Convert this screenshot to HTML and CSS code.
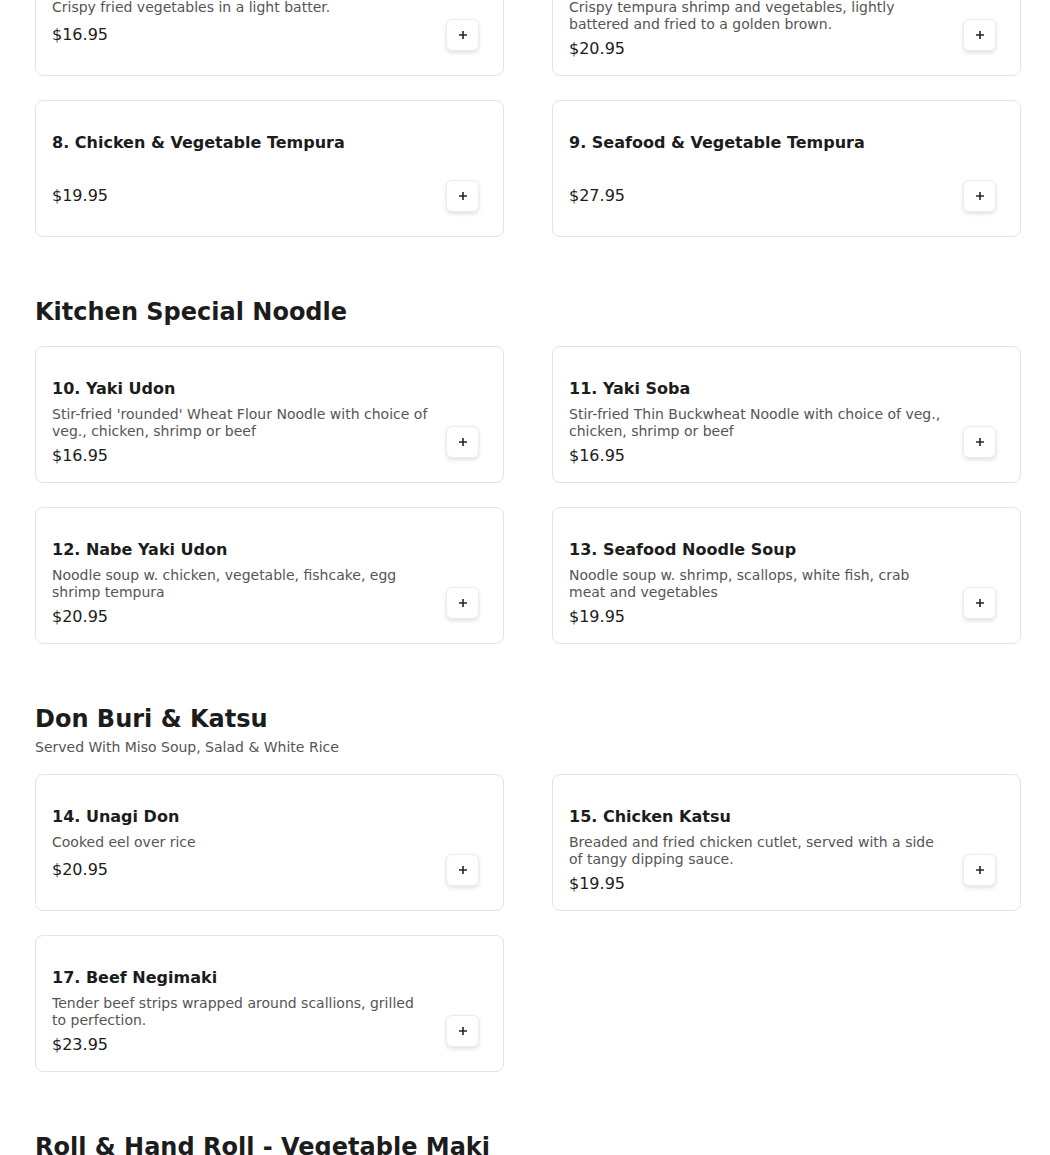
FILE: index.html
```html
<!DOCTYPE html>
<html lang="en">
<head>
<meta charset="utf-8">
<title>Menu</title>
<link rel="stylesheet" href="styles.css">
</head>
<body>
<main class="menu">
  <section class="section first">
    <div class="grid">
      <article class="card">
        <div class="info">
          <h3 class="name">6. Vegetable Tempura</h3>
          <p class="desc">Crispy fried vegetables in a light batter.</p>
          <p class="price">$16.95</p>
        </div>
        <button class="add" type="button" aria-label="Add"><svg viewBox="0 0 10 10" width="10" height="10"><path d="M5 1v8M1 5h8"/></svg></button>
      </article>
      <article class="card">
        <div class="info">
          <h3 class="name">7. Shrimp &amp; Vegetable Tempura</h3>
          <p class="desc">Crispy tempura shrimp and vegetables, lightly battered and fried to a golden brown.</p>
          <p class="price">$20.95</p>
        </div>
        <button class="add" type="button" aria-label="Add"><svg viewBox="0 0 10 10" width="10" height="10"><path d="M5 1v8M1 5h8"/></svg></button>
      </article>
      <article class="card">
        <div class="info">
          <h3 class="name">8. Chicken &amp; Vegetable Tempura</h3>
          <p class="desc"></p>
          <p class="price">$19.95</p>
        </div>
        <button class="add" type="button" aria-label="Add"><svg viewBox="0 0 10 10" width="10" height="10"><path d="M5 1v8M1 5h8"/></svg></button>
      </article>
      <article class="card">
        <div class="info">
          <h3 class="name">9. Seafood &amp; Vegetable Tempura</h3>
          <p class="desc"></p>
          <p class="price">$27.95</p>
        </div>
        <button class="add" type="button" aria-label="Add"><svg viewBox="0 0 10 10" width="10" height="10"><path d="M5 1v8M1 5h8"/></svg></button>
      </article>
    </div>
  </section>

  <section class="section">
    <h2 class="heading">Kitchen Special Noodle</h2>
    <div class="grid">
      <article class="card">
        <div class="info">
          <h3 class="name">10. Yaki Udon</h3>
          <p class="desc">Stir-fried 'rounded' Wheat Flour Noodle with choice of veg., chicken, shrimp or beef</p>
          <p class="price">$16.95</p>
        </div>
        <button class="add" type="button" aria-label="Add"><svg viewBox="0 0 10 10" width="10" height="10"><path d="M5 1v8M1 5h8"/></svg></button>
      </article>
      <article class="card">
        <div class="info">
          <h3 class="name">11. Yaki Soba</h3>
          <p class="desc">Stir-fried Thin Buckwheat Noodle with choice of veg., chicken, shrimp or beef</p>
          <p class="price">$16.95</p>
        </div>
        <button class="add" type="button" aria-label="Add"><svg viewBox="0 0 10 10" width="10" height="10"><path d="M5 1v8M1 5h8"/></svg></button>
      </article>
      <article class="card">
        <div class="info">
          <h3 class="name">12. Nabe Yaki Udon</h3>
          <p class="desc">Noodle soup w. chicken, vegetable, fishcake, egg shrimp tempura</p>
          <p class="price">$20.95</p>
        </div>
        <button class="add" type="button" aria-label="Add"><svg viewBox="0 0 10 10" width="10" height="10"><path d="M5 1v8M1 5h8"/></svg></button>
      </article>
      <article class="card">
        <div class="info">
          <h3 class="name">13. Seafood Noodle Soup</h3>
          <p class="desc">Noodle soup w. shrimp, scallops, white fish, crab meat and vegetables</p>
          <p class="price">$19.95</p>
        </div>
        <button class="add" type="button" aria-label="Add"><svg viewBox="0 0 10 10" width="10" height="10"><path d="M5 1v8M1 5h8"/></svg></button>
      </article>
    </div>
  </section>

  <section class="section">
    <h2 class="heading">Don Buri &amp; Katsu</h2>
    <p class="subheading">Served With Miso Soup, Salad &amp; White Rice</p>
    <div class="grid">
      <article class="card">
        <div class="info">
          <h3 class="name">14. Unagi Don</h3>
          <p class="desc">Cooked eel over rice</p>
          <p class="price">$20.95</p>
        </div>
        <button class="add" type="button" aria-label="Add"><svg viewBox="0 0 10 10" width="10" height="10"><path d="M5 1v8M1 5h8"/></svg></button>
      </article>
      <article class="card">
        <div class="info">
          <h3 class="name">15. Chicken Katsu</h3>
          <p class="desc">Breaded and fried chicken cutlet, served with a side of tangy dipping sauce.</p>
          <p class="price">$19.95</p>
        </div>
        <button class="add" type="button" aria-label="Add"><svg viewBox="0 0 10 10" width="10" height="10"><path d="M5 1v8M1 5h8"/></svg></button>
      </article>
      <article class="card">
        <div class="info">
          <h3 class="name">17. Beef Negimaki</h3>
          <p class="desc">Tender beef strips wrapped around scallions, grilled to perfection.</p>
          <p class="price">$23.95</p>
        </div>
        <button class="add" type="button" aria-label="Add"><svg viewBox="0 0 10 10" width="10" height="10"><path d="M5 1v8M1 5h8"/></svg></button>
      </article>
    </div>
  </section>

  <section class="section">
    <h2 class="heading">Roll &amp; Hand Roll - Vegetable Maki</h2>
  </section>
</main>
</body>
</html>
```

FILE: styles.css
```css
* { box-sizing: border-box; }

html, body {
  margin: 0;
  padding: 0;
  background: #ffffff;
}

body {
  font-family: "DejaVu Sans", "Liberation Sans", sans-serif;
  color: #1c1c1c;
  overflow: hidden;
}

.menu {
  width: 986px;
  margin: -61px 0 0 35px;
}

.section {
  margin-top: 59px;
}

.section.first {
  margin-top: 0;
}

.heading {
  margin: 0;
  font-size: 24px;
  line-height: 32px;
  font-weight: 700;
  color: #1c1c1c;
}

.subheading {
  margin: 2px 0 0;
  font-size: 14px;
  line-height: 20px;
  color: #555555;
}

.heading + .grid {
  margin-top: 18px;
}

.subheading + .grid {
  margin-top: 17px;
}

.grid {
  display: grid;
  grid-template-columns: 1fr 1fr;
  column-gap: 48px;
  row-gap: 24px;
}

.card {
  display: flex;
  align-items: flex-start;
  gap: 16px;
  min-height: 137px;
  padding: 30px 24px 14px 16px;
  border: 1px solid #e3e3e3;
  border-radius: 8px;
  background: #ffffff;
}

.info {
  flex: 1;
  min-width: 0;
}

.name {
  margin: 0;
  font-size: 16px;
  line-height: 24px;
  font-weight: 700;
  color: #1c1c1c;
}

.desc {
  margin: 5px 0 0;
  min-height: 20px;
  font-size: 14px;
  line-height: 17px;
  color: #555555;
}

.price {
  margin: 4px 0 0;
  font-size: 16px;
  line-height: 24px;
  color: #1c1c1c;
}

.add {
  flex: none;
  display: flex;
  align-items: center;
  justify-content: center;
  width: 33px;
  height: 32px;
  margin-top: 49px;
  padding: 0;
  border: 1px solid #ececec;
  border-radius: 6px;
  background: #ffffff;
  box-shadow: 0 2px 4px rgba(0, 0, 0, 0.12);
  cursor: pointer;
}

.add svg {
  display: block;
  fill: none;
  stroke: #262626;
  stroke-width: 1.6;
}
```
